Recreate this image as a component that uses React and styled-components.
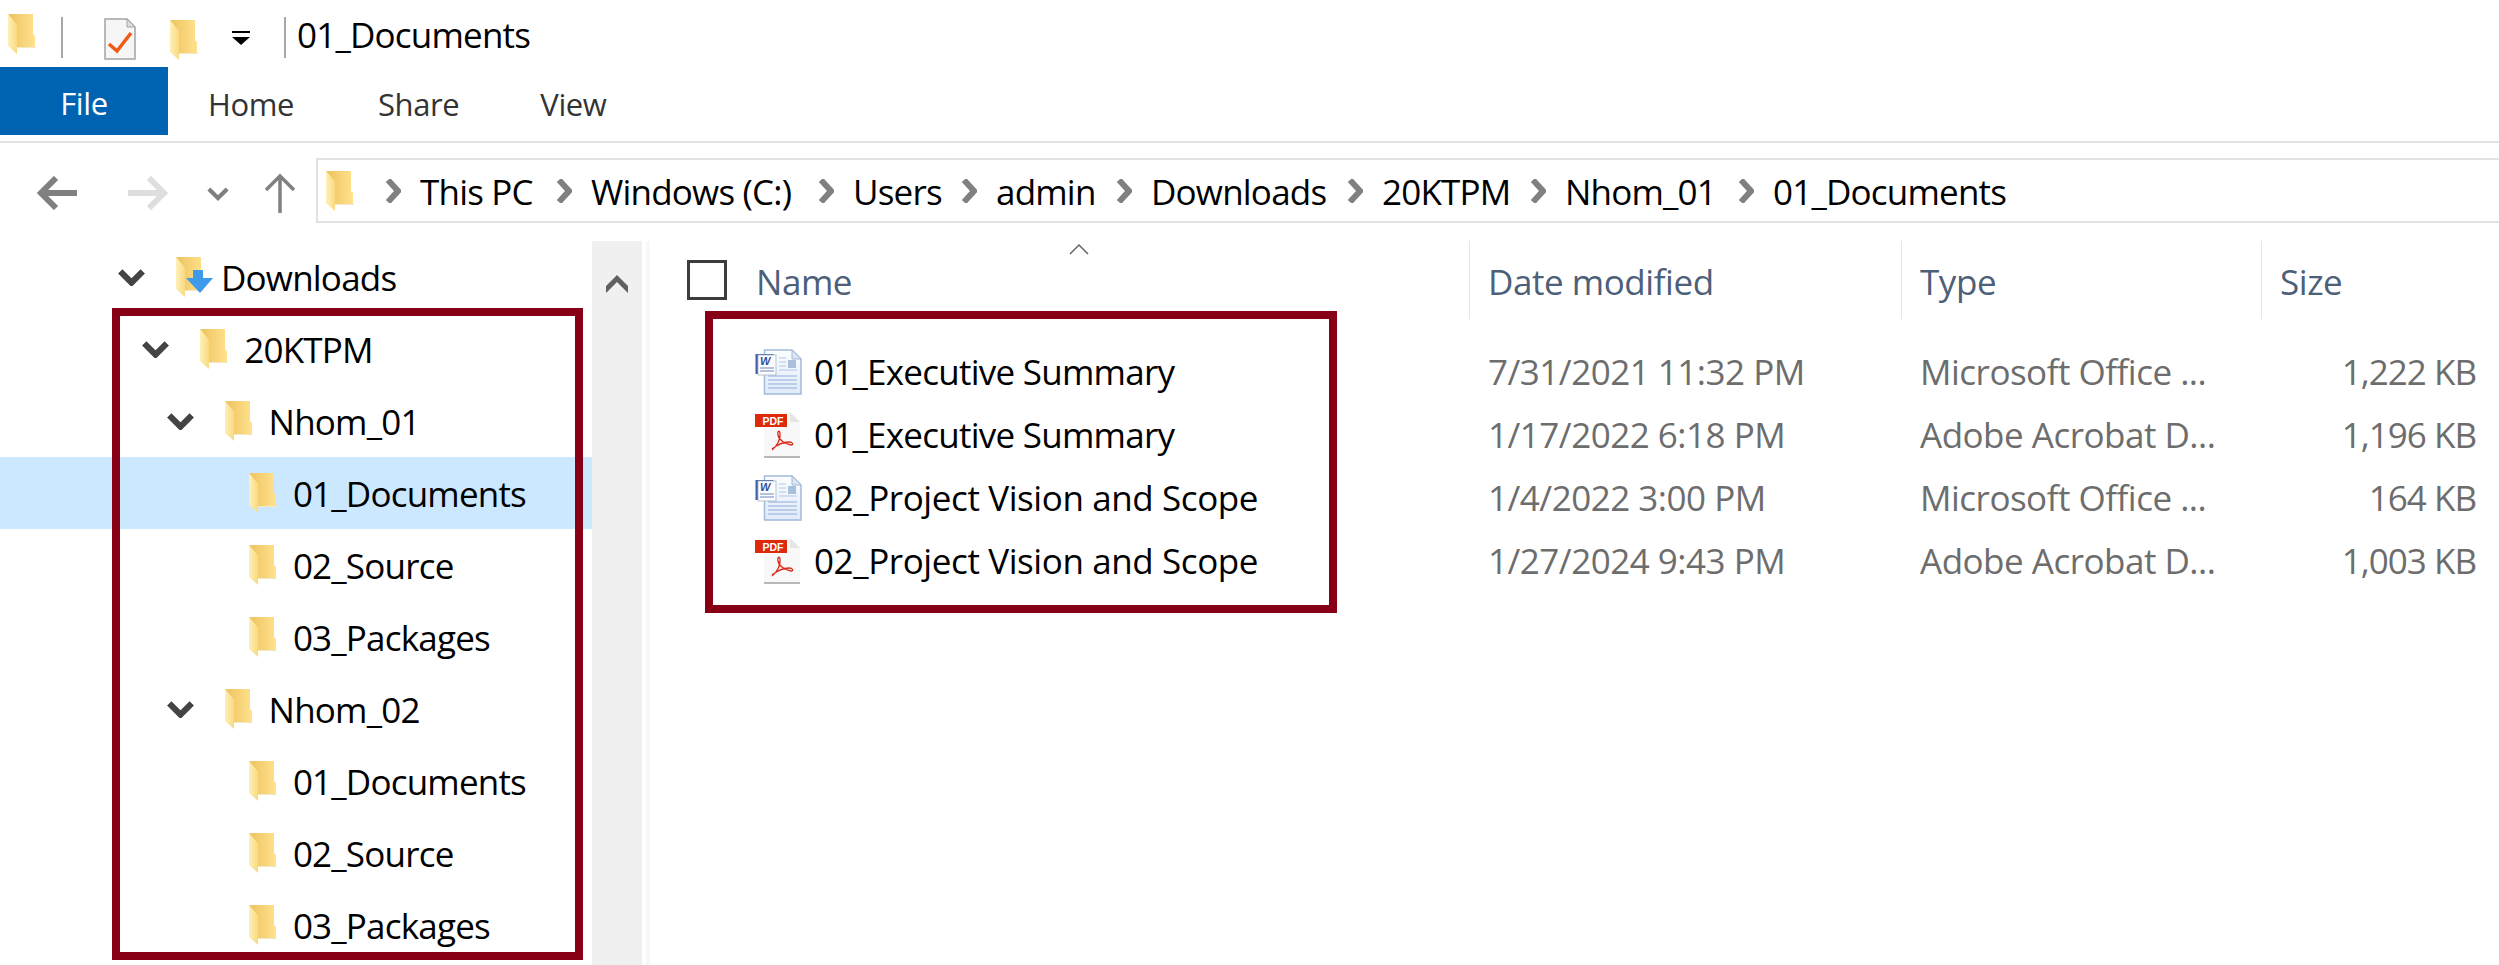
import React, { useId } from "react";
import styled, { createGlobalStyle } from "styled-components";

const GlobalStyle = createGlobalStyle`
    html, body {
        margin: 0;
        padding: 0;
        background: #fff;
        overflow: hidden;
    }
`;

const Page = styled.div`
    position: relative;
    display: flex;
    flex-direction: column;
    width: 2499px;
    height: 965px;
    overflow: hidden;
    background: #fff;
    color: #000;
    font-family: "Open Sans", "Noto Sans", sans-serif;
    font-size: 35px;
    letter-spacing: -0.8px;
`;

/* title bar */
const TitleBar = styled.div`
    display: flex;
    align-items: center;
    height: 67px;
    flex: none;
    padding-left: 8px;
`;

const QuickIcon = styled.span`
    display: flex;
    margin-left: ${(p) => p.$gap}px;
    margin-top: ${(p) => p.$drop || 0}px;
`;

const TitleDivider = styled.i`
    width: 2px;
    height: 41px;
    margin-left: ${(p) => p.$gap}px;
    margin-top: 8px;
    background: #a8a8a8;
`;

const TitleText = styled.span`
    margin-left: 11px;
    margin-top: 1px;
`;

/* ribbon tabs */
const Ribbon = styled.div`
    display: flex;
    height: 68px;
    flex: none;
    margin-bottom: 6px;
    font-size: 31px;
    letter-spacing: -0.4px;
    color: #333;
`;

const FileTab = styled.div`
    display: flex;
    align-items: center;
    justify-content: center;
    width: 168px;
    padding-top: 4px;
    box-sizing: border-box;
    background: #0063b1;
    color: #fff;
`;

const Tab = styled.div`
    display: flex;
    align-items: center;
    padding-top: 5px;
    margin-left: ${(p) => p.$gap}px;
`;

/* address row */
const NavRow = styled.div`
    display: flex;
    align-items: center;
    height: 82px;
    flex: none;
    box-sizing: border-box;
    border-top: 2px solid #e4e4e4;
    padding-top: 15px;
`;

const NavButton = styled.span`
    display: flex;
    margin-left: ${(p) => p.$gap}px;
    margin-top: 5px;
`;

const AddressBar = styled.div`
    display: flex;
    align-items: center;
    flex: 1;
    height: 65px;
    margin-left: 20px;
    box-sizing: border-box;
    border: 2px solid #e2e2e2;
    border-right: 0;
    padding-left: 8px;
`;

const Crumb = styled.span`
    display: flex;
    align-items: center;
    width: ${(p) => p.$width}px;
    flex: none;
    padding-top: 2px;
`;

const CrumbArrow = styled.span`
    display: flex;
    width: 35px;
    flex: none;
    margin-left: ${(p) => p.$gap}px;
`;

/* body */
const Body = styled.div`
    display: flex;
    flex: 1;
    min-height: 0;
`;

const Tree = styled.div`
    width: 592px;
    flex: none;
    padding-top: 18px;
`;

const TreeRow = styled.div`
    display: flex;
    align-items: center;
    height: 72px;
    padding-left: ${(p) => 118 + p.$level * 24.3}px;
    background: ${(p) => (p.$selected ? "#cce8ff" : "transparent")};
`;

const TreeToggle = styled.span`
    display: flex;
    width: 58px;
    flex: none;
`;

const TreeLabel = styled.span`
    margin-left: ${(p) => p.$gap}px;
`;

const ScrollTrack = styled.div`
    display: flex;
    justify-content: center;
    width: 50px;
    flex: none;
    margin-top: 18px;
    padding-top: 15px;
    box-sizing: border-box;
    background: #f0f0f0;
`;

const Stripe = styled.div`
    width: 4px;
    flex: none;
    margin-top: 18px;
    margin-left: 4px;
    background: #f8f8f8;
`;

const Files = styled.div`
    flex: 1;
    min-width: 0;
    padding-top: 18px;
`;

const columns = "819px 432px 360px 238px";

const HeaderRow = styled.div`
    position: relative;
    display: grid;
    grid-template-columns: ${columns};
    height: 78px;
    margin-bottom: 21px;
    color: #4c607a;
    letter-spacing: -0.45px;
`;

const HeaderCell = styled.div`
    display: flex;
    align-items: center;
    padding-top: 2px;
    padding-left: ${(p) => p.$pad ?? 18}px;
    border-left: ${(p) => (p.$first ? "0" : "1px solid #e5e5e5")};
`;

const CheckBox = styled.span`
    width: 40px;
    height: 40px;
    box-sizing: border-box;
    border: 3px solid #3c3c3c;
    margin-top: -2px;
    margin-right: 29px;
`;

const SortCaret = styled.span`
    position: absolute;
    left: 419px;
    top: 3px;
    display: flex;
`;

const FileRow = styled.div`
    display: grid;
    grid-template-columns: ${columns};
    align-items: center;
    height: 63px;
    color: #6d6d6d;
`;

const NameCell = styled.div`
    display: flex;
    align-items: center;
    padding-left: 105px;
    color: #000;
    letter-spacing: ${(p) => p.$track}px;
`;

const FileIcon = styled.span`
    display: flex;
    width: 59px;
    flex: none;
`;

const DataCell = styled.div`
    padding-left: 19px;
    white-space: nowrap;
    letter-spacing: -0.5px;
`;

const SizeCell = styled.div`
    padding-right: 23px;
    text-align: right;
    white-space: nowrap;
    letter-spacing: -1px;
`;

/* the two red marks lie over the window */
const TreeMark = styled.div`
    position: absolute;
    left: 112px;
    top: 308px;
    width: 471px;
    height: 652px;
    box-sizing: border-box;
    border: 8px solid #880015;
    pointer-events: none;
`;

const FilesMark = styled.div`
    position: absolute;
    left: 705px;
    top: 311px;
    width: 632px;
    height: 302px;
    box-sizing: border-box;
    border: 8px solid #880015;
    pointer-events: none;
`;

const Folder = ({ download }) => {
    const id = useId();
    return (
        <svg width={download ? 38 : 28} height="40" viewBox={download ? "0 0 38 40" : "0 0 28 40"}>
            <defs>
                <linearGradient id={`${id}b`} x1="0" x2="1" y1="0" y2="0">
                    <stop offset="0" stopColor="#eec25e" />
                    <stop offset="1" stopColor="#ffe28e" />
                </linearGradient>
                <linearGradient id={`${id}f`} x1="0" x2="1" y1="0" y2="0">
                    <stop offset="0" stopColor="#fff0b8" />
                    <stop offset="1" stopColor="#f9da80" />
                </linearGradient>
            </defs>
            <path d="M0 0H25V20L27 22V33H9V12Z" fill={`url(#${id}b)`} />
            <path d="M0 0L9 11V40L0 32Z" fill={`url(#${id}f)`} />
            <path d="M9 33H28V34H9Z" fill="#f3e8c8" />
            {download && <path d="M17 13H27V21H37L24 36L10 21H17Z" fill="#3d9be9" />}
        </svg>
    );
};

const TaskDoc = () => (
    <svg width="32" height="42" viewBox="0 0 32 42">
        <path d="M1 1H23L31 9V41H1Z" fill="#f6f6f6" stroke="#a3a3a3" strokeWidth="1.5" />
        <path d="M23 1V9H31Z" fill="#dcdcdc" stroke="#a3a3a3" strokeWidth="1" />
        <path d="M5 26L13 33L27 15" fill="none" stroke="#f05a14" strokeWidth="3.5" />
    </svg>
);

const DropCaret = () => (
    <svg width="18" height="14" viewBox="0 0 18 14">
        <path d="M0 0H18V2H0ZM0 6H18L9 14Z" fill="#000" />
    </svg>
);

const ArrowLeft = ({ color, flip }) => (
    <svg width="40" height="34" viewBox="0 0 40 34" style={flip ? { transform: "scaleX(-1)" } : undefined}>
        <path d="M40 17H5M19 2L4 17L19 32" fill="none" stroke={color} strokeWidth="6" />
    </svg>
);

const ArrowUp = () => (
    <svg width="32" height="40" viewBox="0 0 32 40">
        <path d="M16 40V3M2 17L16 3L30 17" fill="none" stroke="#808080" strokeWidth="3.5" />
    </svg>
);

const Chevron = ({ w, h, color, thick }) => (
    <svg width={w} height={h} viewBox="0 0 24 16">
        <path d="M2 3L12 13L22 3" fill="none" stroke={color} strokeWidth={thick} />
    </svg>
);

const CrumbChevron = () => (
    <svg width="16" height="24" viewBox="0 0 16 24">
        <path d="M3 1L13 12L3 23" fill="none" stroke="#808080" strokeWidth="6" />
    </svg>
);

const ScrollUp = () => (
    <svg width="22" height="20" viewBox="0 0 22 20">
        <path d="M0 13L11 2L22 13V20L11 9L0 20Z" fill="#606060" />
    </svg>
);

const SortUp = () => (
    <svg width="20" height="11" viewBox="0 0 20 11">
        <path d="M1 10L10 1L19 10" fill="none" stroke="#666" strokeWidth="1.5" />
    </svg>
);

const WordIcon = () => {
    const id = useId();
    return (
        <svg width="47" height="46" viewBox="0 0 47 46">
            <defs>
                <linearGradient id={id} x1="0" x2="0" y1="0" y2="1">
                    <stop offset="0" stopColor="#fbfdff" />
                    <stop offset="1" stopColor="#dfeafa" />
                </linearGradient>
            </defs>
            <path d="M9.500 1H37L46 10V45H9.500Z" fill={`url(#${id})`} stroke="#a3bad8" strokeWidth="1.500" />
            <path d="M37 1V10H46Z" fill="#dbe6f3" stroke="#a3bad8" />
            <path d="M13 27H42M13 31H42M13 35H42M13 39H42" stroke="#8fadd8" strokeWidth="1.200" />
            <path d="M24 9H31M24 13H31M24 17H31M24 21H42" stroke="#b3c7e2" strokeWidth="1.200" />
            <rect x="33" y="11" width="8" height="8" fill="#a9c0dc" />
            <rect x="0.500" y="5" width="18" height="20" fill="#3f5fa8" />
            <rect x="3" y="6" width="18" height="20" fill="#fdfdff" stroke="#a9b3c6" strokeWidth="0.800" />
            <text x="5" y="16" fontFamily="Liberation Sans, sans-serif" fontSize="11" fontWeight="700" fontStyle="italic" fill="#31509c" letterSpacing="0">W</text>
            <path d="M5 19H19M5 22H19" stroke="#6d87bf" strokeWidth="1.200" />
        </svg>
    );
};

const PdfIcon = () => (
    <svg width="46" height="47" viewBox="0 0 46 47">
        <path d="M9 1H35L45 11V45H9Z" fill="#f8f8f8" />
        <path d="M35 1V11H45Z" fill="#e6e6e6" />
        <path d="M9 45H45V47H9Z" fill="#b8b8b8" />
        <rect x="0" y="3" width="32" height="13" fill="#de2a08" />
        <text x="7.500" y="14" fontFamily="Liberation Sans, sans-serif" fontSize="10.500" fontWeight="700" fill="#fff" letterSpacing="0">PDF</text>
        <path d="M17 39C22 35 26 28 25 22C24.500 19 22 20 23 24C24 29 30 33 36 34C39 34 38 31 34 31C28 31 22 34 17 38" fill="none" stroke="#d92a1c" strokeWidth="1.300" />
    </svg>
);

const TREE = [
    { label: "Downloads", level: 0, open: true, download: true },
    { label: "20KTPM", level: 1, open: true },
    { label: "Nhom_01", level: 2, open: true },
    { label: "01_Documents", level: 3, selected: true },
    { label: "02_Source", level: 3 },
    { label: "03_Packages", level: 3 },
    { label: "Nhom_02", level: 2, open: true },
    { label: "01_Documents", level: 3 },
    { label: "02_Source", level: 3 },
    { label: "03_Packages", level: 3 },
];

// track: letter spacing that brings the name to the width it has in the window
const FILES = [
    { name: "01_Executive Summary", track: -0.75, word: true, date: "7/31/2021 11:32 PM", type: "Microsoft Office ...", size: "1,222 KB" },
    { name: "01_Executive Summary", track: -0.75, date: "1/17/2022 6:18 PM", type: "Adobe Acrobat D...", size: "1,196 KB" },
    { name: "02_Project Vision and Scope", track: -0.4, word: true, date: "1/4/2022 3:00 PM", type: "Microsoft Office ...", size: "164 KB" },
    { name: "02_Project Vision and Scope", track: -0.4, date: "1/27/2024 9:43 PM", type: "Adobe Acrobat D...", size: "1,003 KB" },
];

// each crumb gets the width it has in the window
const CRUMBS = [
    { label: "This PC", width: 136 },
    { label: "Windows (C:)", width: 227 },
    { label: "Users", width: 108 },
    { label: "admin", width: 120 },
    { label: "Downloads", width: 196 },
    { label: "20KTPM", width: 148 },
    { label: "Nhom_01", width: 173 },
    { label: "01_Documents", width: 240 },
];

const App = () => {
    return (
        <Page>
            <GlobalStyle />
            <TitleBar>
                <QuickIcon $gap={0} $drop={1}><Folder /></QuickIcon>
                <TitleDivider $gap={25} />
                <QuickIcon $gap={41} $drop={11}><TaskDoc /></QuickIcon>
                <QuickIcon $gap={34} $drop={13}><Folder /></QuickIcon>
                <QuickIcon $gap={34} $drop={8}><DropCaret /></QuickIcon>
                <TitleDivider $gap={34} />
                <TitleText>01_Documents</TitleText>
            </TitleBar>
            <Ribbon>
                <FileTab>File</FileTab>
                <Tab $gap={40}>Home</Tab>
                <Tab $gap={84}>Share</Tab>
                <Tab $gap={81}>View</Tab>
            </Ribbon>
            <NavRow>
                <NavButton $gap={37}><ArrowLeft color="#808080" /></NavButton>
                <NavButton $gap={51}><ArrowLeft color="#dedede" flip /></NavButton>
                <NavButton $gap={39}><Chevron w={22} h={15} color="#808080" thick={4.5} /></NavButton>
                <NavButton $gap={35}><ArrowUp /></NavButton>
                <AddressBar>
                    <Folder />
                    {CRUMBS.map((c, i) => (
                        <React.Fragment key={i}>
                            <CrumbArrow $gap={i === 0 ? 31 : 0}><CrumbChevron /></CrumbArrow>
                            <Crumb $width={c.width}>{c.label}</Crumb>
                        </React.Fragment>
                    ))}
                </AddressBar>
            </NavRow>
            <Body>
                <Tree>
                    {TREE.map((row, i) => (
                        <TreeRow key={i} $level={row.level} $selected={row.selected}>
                            <TreeToggle>
                                {row.open && <Chevron w={27} h={18} color="#444" thick={5.5} />}
                            </TreeToggle>
                            <Folder download={row.download} />
                            <TreeLabel $gap={row.download ? 7 : 16}>{row.label}</TreeLabel>
                        </TreeRow>
                    ))}
                </Tree>
                <ScrollTrack>
                    <span><ScrollUp /></span>
                </ScrollTrack>
                <Stripe />
                <Files>
                    <HeaderRow>
                        <HeaderCell $first $pad={37}>
                            <CheckBox />
                            Name
                        </HeaderCell>
                        <HeaderCell>Date modified</HeaderCell>
                        <HeaderCell>Type</HeaderCell>
                        <HeaderCell>Size</HeaderCell>
                        <SortCaret><SortUp /></SortCaret>
                    </HeaderRow>
                    {FILES.map((f, i) => (
                        <FileRow key={i}>
                            <NameCell $track={f.track}>
                                <FileIcon>{f.word ? <WordIcon /> : <PdfIcon />}</FileIcon>
                                {f.name}
                            </NameCell>
                            <DataCell>{f.date}</DataCell>
                            <DataCell>{f.type}</DataCell>
                            <SizeCell>{f.size}</SizeCell>
                        </FileRow>
                    ))}
                </Files>
            </Body>
            <TreeMark />
            <FilesMark />
        </Page>
    );
};

export default App;
